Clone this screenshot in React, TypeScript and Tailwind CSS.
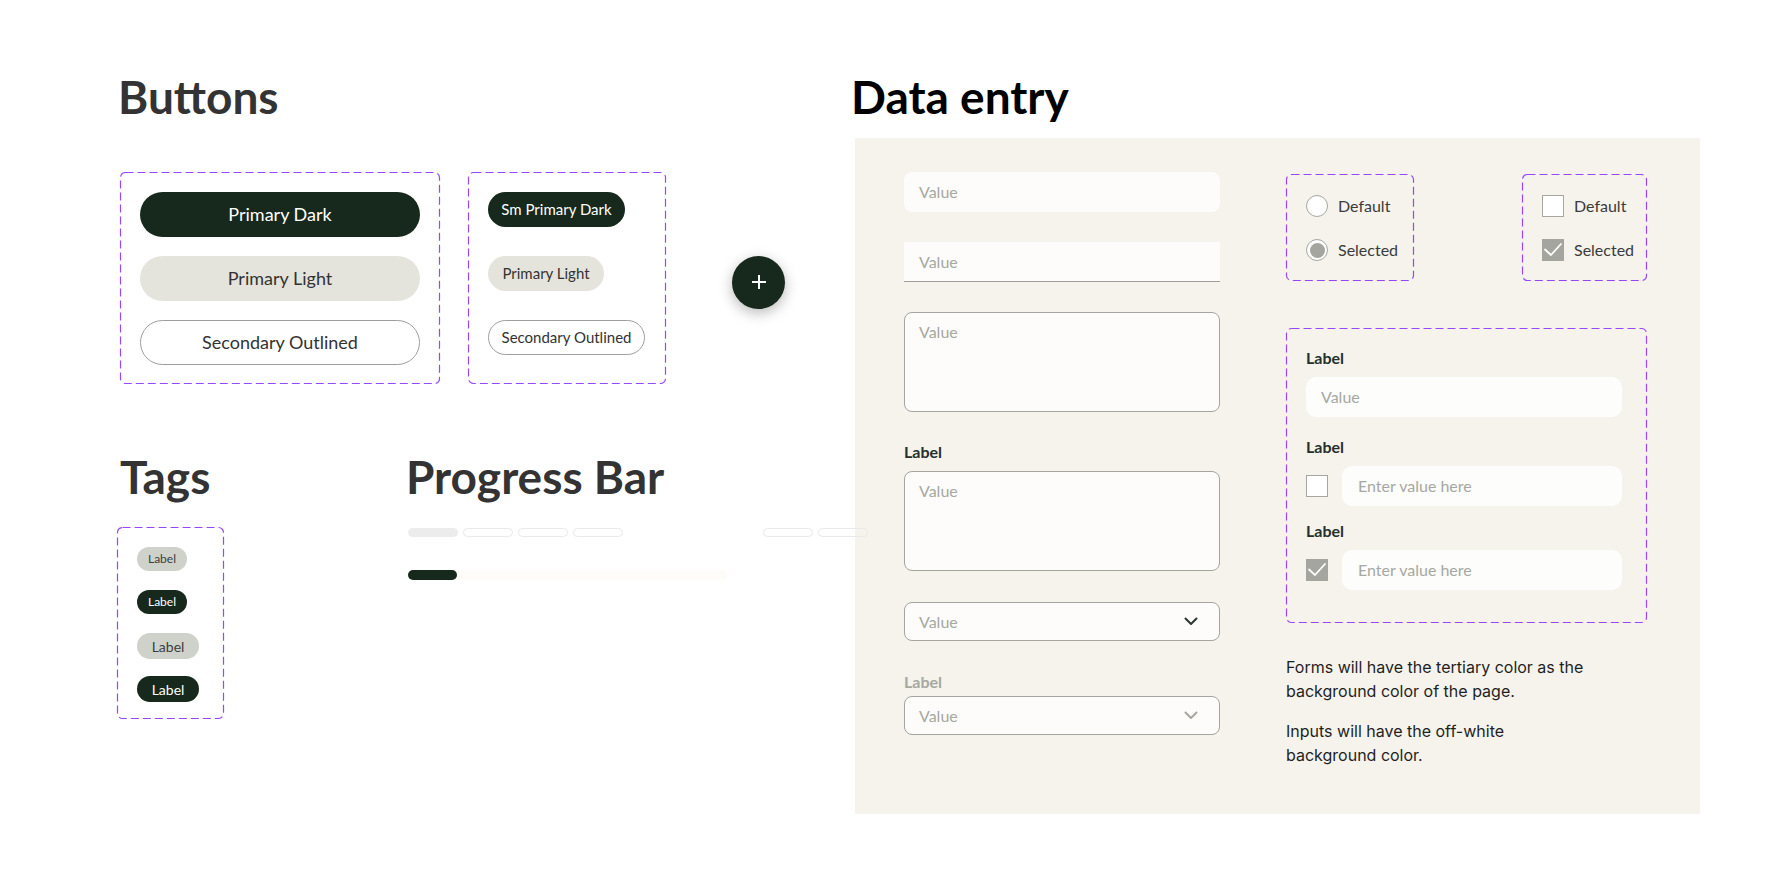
import React from "react";

const heading = "font-['Lato',sans-serif] font-bold text-[46px] leading-[46px] h-[46px] whitespace-nowrap";
const fieldText = "font-['Lato',sans-serif] text-[16px] leading-[20px] text-[#a6a8a1]";
const labelText = "font-['Lato',sans-serif] font-bold text-[16px] leading-[20px] h-[20px]";

function DashedBox({ className = "", children }: { className?: string; children?: React.ReactNode }) {
  return (
    <div className={`relative ${className}`}>
      <svg className="pointer-events-none absolute inset-0 h-full w-full overflow-visible" aria-hidden="true">
        <rect
          x="0.5"
          y="0.5"
          rx="5"
          width="100%"
          height="100%"
          className="w-[calc(100%_-_1px)] h-[calc(100%_-_1px)]"
          fill="none"
          stroke="#9747ff"
          strokeWidth="1.2"
          strokeDasharray="8 4"
        />
      </svg>
      {children}
    </div>
  );
}

function Chevron({ color }: { color: string }) {
  return (
    <svg width="14" height="9" viewBox="0 0 14 9" fill="none">
      <path d="M1.5 1.5 L7 7 L12.5 1.5" stroke={color} strokeWidth="2" strokeLinecap="round" strokeLinejoin="round" />
    </svg>
  );
}

function Check() {
  return (
    <svg width="22" height="22" viewBox="0 0 22 22" fill="none">
      <path d="M3 10.5 L9 16 L19 5" stroke="#ffffff" strokeWidth="1.8" strokeLinecap="round" strokeLinejoin="round" />
    </svg>
  );
}

function Checkbox({ checked }: { checked?: boolean }) {
  return checked ? (
    <div className="h-[22px] w-[22px] shrink-0 bg-[#a3a59e]">
      <Check />
    </div>
  ) : (
    <div className="h-[22px] w-[22px] shrink-0 border border-[#a5a7a0] bg-white" />
  );
}

function Radio({ checked }: { checked?: boolean }) {
  return (
    <div className="flex h-[22px] w-[22px] shrink-0 items-center justify-center rounded-full border border-[#a5a7a0] bg-white">
      {checked && <div className="h-[15px] w-[15px] rounded-full bg-[#a3a59e]" />}
    </div>
  );
}

function Segment({ filled }: { filled?: boolean }) {
  return (
    <div
      className={`h-[9px] w-[50px] rounded-full border ${
        filled ? "border-[#ececec] bg-[#ececec]" : "border-[#e9e9e9]"
      }`}
    />
  );
}

export default function App() {
  return (
    <div className="min-h-[896px] w-full bg-white font-['Lato',sans-serif]">
      <div className="flex pl-[120px] pt-[74px]">
        {/* left: buttons, tags, progress */}
        <div className="w-[735px] shrink-0">
          <h2 className={`${heading} -ml-[2px] text-[#333333]`}>Buttons</h2>

          <div className="mt-[52px] flex items-center">
            <DashedBox className="flex h-[212px] w-[320px] flex-col gap-[19px] pl-5 pt-5">
              <button className="h-[45px] w-[280px] rounded-full bg-[#16291c] text-[18px] text-white">Primary Dark</button>
              <button className="h-[45px] w-[280px] rounded-full bg-[#e4e3dc] text-[18px] text-[#333333]">Primary Light</button>
              <button className="h-[45px] w-[280px] rounded-full border border-[#9e9e9e] bg-white text-[18px] text-[#333333]">
                Secondary Outlined
              </button>
            </DashedBox>

            <DashedBox className="ml-[28px] flex h-[212px] w-[198px] flex-col gap-[29px] pl-5 pt-5">
              <button className="h-[35px] w-[137px] rounded-full bg-[#16291c] text-[15px] text-white">Sm Primary Dark</button>
              <button className="h-[35px] w-[116px] rounded-full bg-[#e4e3dc] text-[15px] text-[#333333]">Primary Light</button>
              <button className="h-[35px] w-[157px] rounded-full border border-[#9e9e9e] bg-white text-[15px] text-[#333333]">
                Secondary Outlined
              </button>
            </DashedBox>

            <button className="ml-[66px] mt-[8px] flex h-[53px] w-[53px] items-center justify-center rounded-full bg-[#16291c] shadow-[0_4px_14px_rgba(0,0,0,0.28)]">
              <svg width="18" height="18" viewBox="0 0 18 18" fill="none">
                <path d="M9 2 V16 M2 9 H16" stroke="#ffffff" strokeWidth="2" />
              </svg>
            </button>
          </div>

          <div className="mt-[70px] flex">
            <div className="w-[289px] shrink-0">
              <h2 className={`${heading} text-[#333333]`}>Tags</h2>
              <DashedBox className="-ml-[3px] mt-[27px] flex h-[192px] w-[107px] flex-col items-start pl-5 pt-5">
                <span className="flex h-[24px] w-[50px] items-center justify-center rounded-full bg-[#cfd2cb] text-[12px] text-[#3d3d3d]">Label</span>
                <span className="mt-[19px] flex h-[24px] w-[50px] items-center justify-center rounded-full bg-[#16291c] text-[12px] text-white">Label</span>
                <span className="mt-[19px] flex h-[26px] w-[62px] items-center justify-center rounded-full bg-[#cfd2cb] text-[14px] text-[#3d3d3d]">Label</span>
                <span className="mt-[17px] flex h-[26px] w-[62px] items-center justify-center rounded-full bg-[#16291c] text-[14px] text-white">Label</span>
              </DashedBox>
            </div>

            <div className="flex-1">
              <h2 className={`${heading} -ml-[3px] text-[#333333]`}>Progress Bar</h2>
              <div className="relative z-10 -ml-[1px] mt-[28px] flex">
                <div className="flex gap-[5px]">
                  <Segment filled />
                  <Segment />
                  <Segment />
                  <Segment />
                </div>
                <div className="ml-[140px] flex gap-[5px]">
                  <Segment />
                  <Segment />
                </div>
              </div>
              <div className="-ml-[1px] mt-[33px] flex h-[10px] w-[320px] rounded-full bg-[#fdfcf9]">
                <div className="h-[10px] w-[49px] rounded-full bg-[#16291c]" />
              </div>
            </div>
          </div>
        </div>

        {/* right: data entry */}
        <div className="w-[845px] shrink-0">
          <h2 className={`${heading} -ml-[4px] text-black`}>Data entry</h2>
          <div className="mt-[18px] flex h-[676px] bg-[#f5f3ec] pl-[49px] pt-[34px]">
            <div className="flex w-[316px] shrink-0 flex-col">
              <div className={`flex h-[40px] items-center rounded-[8px] bg-[#fdfcfa] px-[15px] ${fieldText}`}>Value</div>
              <div className={`mt-[30px] flex h-[40px] items-center border-b border-[#9c9e97] bg-[#fdfcfa] px-[15px] ${fieldText}`}>
                Value
              </div>
              <div className={`mt-[30px] h-[100px] rounded-[8px] border border-[#a3a59e] bg-[#fdfcfa] px-[14px] pt-[9px] ${fieldText}`}>
                Value
              </div>
              <div className={`mt-[30px] ${labelText} text-[#25302f]`}>Label</div>
              <div className={`mt-[9px] h-[100px] rounded-[8px] border border-[#a3a59e] bg-[#fdfcfa] px-[14px] pt-[9px] ${fieldText}`}>
                Value
              </div>
              <div className={`mt-[31px] flex h-[39px] items-center justify-between rounded-[8px] border border-[#a3a59e] bg-[#fdfcfa] pl-[14px] pr-[21px] ${fieldText}`}>
                <span>Value</span>
                <Chevron color="#2b3533" />
              </div>
              <div className={`mt-[31px] ${labelText} text-[#a6a8a1]`}>Label</div>
              <div className={`mt-[4px] flex h-[39px] items-center justify-between rounded-[8px] border border-[#a3a59e] bg-[#fdfcfa] pl-[14px] pr-[21px] ${fieldText}`}>
                <span>Value</span>
                <Chevron color="#a6a8a1" />
              </div>
            </div>

            <div className="ml-[66px] flex w-[361px] shrink-0 flex-col pt-[2px]">
              <div className="flex justify-between">
                <DashedBox className="flex h-[107px] w-[128px] flex-col gap-[22px] pl-5 pt-[21px]">
                  <div className="flex h-[22px] items-center gap-[10px] text-[16px] text-[#3b3b3b]">
                    <Radio />
                    <span>Default</span>
                  </div>
                  <div className="flex h-[22px] items-center gap-[10px] text-[16px] text-[#3b3b3b]">
                    <Radio checked />
                    <span>Selected</span>
                  </div>
                </DashedBox>
                <DashedBox className="flex h-[107px] w-[125px] flex-col gap-[22px] pl-5 pt-[21px]">
                  <div className="flex h-[22px] items-center gap-[10px] text-[16px] text-[#3b3b3b]">
                    <Checkbox />
                    <span>Default</span>
                  </div>
                  <div className="flex h-[22px] items-center gap-[10px] text-[16px] text-[#3b3b3b]">
                    <Checkbox checked />
                    <span>Selected</span>
                  </div>
                </DashedBox>
              </div>

              <DashedBox className="mt-[47px] flex h-[295px] w-[361px] flex-col px-5 pt-5">
                <div className={`${labelText} text-[#25302f]`}>Label</div>
                <div className={`mt-[9px] flex h-[40px] w-[316px] items-center rounded-[10px] bg-[#fdfdfb] pl-[15px] ${fieldText}`}>Value</div>
                <div className={`mt-5 ${labelText} text-[#25302f]`}>Label</div>
                <div className="mt-[9px] flex h-[40px] items-center gap-[14px]">
                  <Checkbox />
                  <div className={`flex h-[40px] w-[280px] items-center rounded-[10px] bg-[#fdfdfb] pl-4 ${fieldText}`}>Enter value here</div>
                </div>
                <div className={`mt-[15px] ${labelText} text-[#25302f]`}>Label</div>
                <div className="mt-[9px] flex h-[40px] items-center gap-[14px]">
                  <Checkbox checked />
                  <div className={`flex h-[40px] w-[280px] items-center rounded-[10px] bg-[#fdfdfb] pl-4 ${fieldText}`}>Enter value here</div>
                </div>
              </DashedBox>

              <div className="mt-[32px] font-['Inter',sans-serif] text-[16px] leading-[24px] text-[#1f1f1f]">
                <p>
                  Forms will have the tertiary color as the
                  <br />
                  background color of the page.
                </p>
                <p className="mt-4">
                  Inputs will have the off-white
                  <br />
                  background color.
                </p>
              </div>
            </div>
          </div>
        </div>
      </div>
    </div>
  );
}
